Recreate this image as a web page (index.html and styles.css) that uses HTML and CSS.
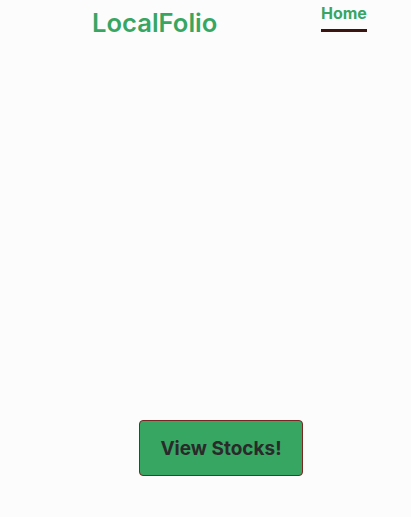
FILE: index.html
```html
<!DOCTYPE html>
<html>
<head>
<meta charset="utf-8">
<link rel="stylesheet" href="styles.css">
</head>
<body>
<header class="header">
  <h1 class="brand">LocalFolio</h1>
  <nav class="nav">
    <a class="nav-link active" href="#">Home</a>
  </nav>
</header>
<main class="main">
  <button class="cta">View Stocks!</button>
</main>
</body>
</html>
```
FILE: styles.css
```css
html, body {
  margin: 0;
  padding: 0;
  background: #fdfcfc;
  font-family: Inter, Roboto, "Liberation Sans", sans-serif;
}
.header {
  display: flex;
  align-items: flex-start;
  height: 40px;
}
.brand {
  margin: 8px 0 0 92px;
  font-size: 25.6px;
  font-weight: 600;
  color: #38a663;
  line-height: 30px;
  width: 229px;
}
.nav {
  display: flex;
}
.nav-link {
  display: block;
  color: #38a663;
  font-weight: 700;
  font-size: 16px;
  line-height: 20px;
  margin-top: 3px;
  padding-bottom: 6px;
  border-bottom: 3px solid #3a1512;
  text-decoration: none;
  width: 46px;
}
.main {
  padding: 380px 0 0 139px;
}
.cta {
  width: 164px;
  height: 56px;
  background: #38a663;
  border: 1px solid #7a2424;
  border-radius: 4px;
  color: #2a2a2a;
  font-family: Inter, Roboto, "Liberation Sans", sans-serif;
  font-weight: 700;
  font-size: 19px;
  padding: 0;
}
```
